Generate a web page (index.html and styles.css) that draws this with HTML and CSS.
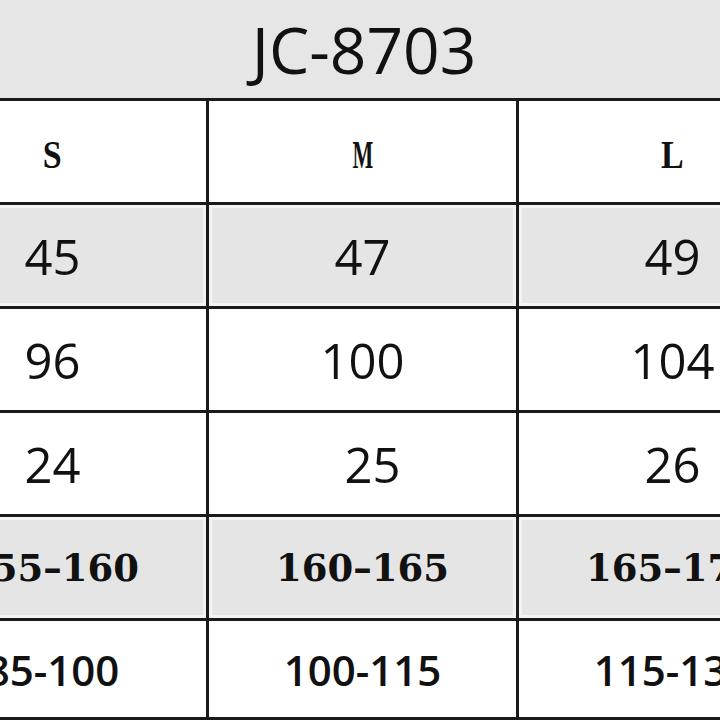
FILE: index.html
```html
<!DOCTYPE html>
<html lang="en">

<head>
    <meta charset="UTF-8">
    <meta name="viewport" content="width=device-width, initial-scale=1.0">
    <title>JC-8703 Size Chart</title>
    <link rel="stylesheet" href="styles.css">
</head>

<body>
    <div class="chart">
        <div class="title">JC-8703</div>
        <div class="grid">
            <!-- sizes -->
            <div class="cell size"><span class="slim">S</span></div>
            <div class="cell size"><span class="narrow">M</span></div>
            <div class="cell size"><span class="slim">L</span></div>

            <div class="cell num shade">45</div>
            <div class="cell num shade">47</div>
            <div class="cell num shade">49</div>

            <div class="cell num">96</div>
            <div class="cell num">100</div>
            <div class="cell num">104</div>

            <div class="cell num">24</div>
            <div class="cell num shift">25</div>
            <div class="cell num">26</div>

            <div class="cell height shade">155–160</div>
            <div class="cell height shade">160–165</div>
            <div class="cell height shade">165–170</div>

            <div class="cell weight last">85-100</div>
            <div class="cell weight last">100-115</div>
            <div class="cell weight last">115-130</div>
        </div>
    </div>
</body>

</html>
```

FILE: styles.css
```css
body {
    margin: 0;
    background: #ffffff;
    overflow: hidden;
    color: #111111;
}

.chart {
    width: 930px;
    margin-left: -101px;
}

.title {
    height: 101px;
    background: #e6e6e6;
    border-bottom: 3px solid #1a1a1a;
    display: flex;
    align-items: center;
    justify-content: center;
    font-family: "Open Sans", sans-serif;
    font-size: 64px;
    line-height: 1;
    padding-top: 2px;
    box-sizing: border-box;
}

.grid {
    display: grid;
    grid-template-columns: repeat(3, 310px);
    grid-auto-rows: 104px;
}

.cell {
    display: flex;
    align-items: center;
    justify-content: center;
    border-right: 3px solid #1a1a1a;
    border-bottom: 3px solid #1a1a1a;
    background: #ffffff;
    box-sizing: border-box;
}

.shade {
    background: #e5e5e5;
    box-shadow: inset 0 0 0 3px #f3f3f3;
}

.last {
    height: 99px;
}

.size {
    font-family: "Liberation Serif", serif;
    font-weight: bold;
    font-size: 40px;
    padding-top: 6px;
}

.size span {
    display: inline-block;
}

.size .slim {
    transform: scaleX(0.85);
}

.size .narrow {
    transform: scaleX(0.55);
}

.num {
    font-family: "Open Sans", sans-serif;
    font-size: 49px;
}

.shift {
    padding-left: 20px;
}

.height {
    font-family: "DejaVu Serif", serif;
    font-weight: bold;
    font-size: 37px;
}

.weight {
    font-family: "Open Sans", sans-serif;
    font-weight: 600;
    font-size: 42px;
}
```
